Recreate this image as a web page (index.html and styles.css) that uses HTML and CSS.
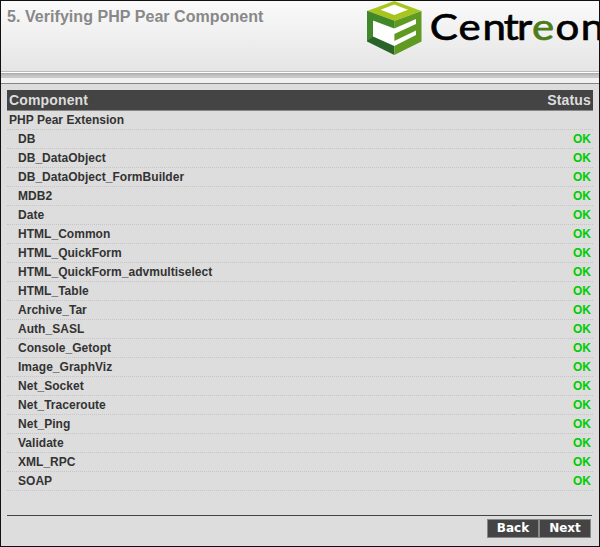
FILE: index.html
```html
<!DOCTYPE html>
<html lang="en">
<head>
<meta charset="utf-8">
<title>Verifying PHP Pear Component</title>
<link rel="stylesheet" href="styles.css">
</head>
<body>
<div class="window">
  <header class="header">
    <h1 class="title">5. Verifying PHP Pear Component</h1>
    <svg class="logo" width="233" height="60" viewBox="366 1 233 60" role="img" aria-label="Centreon">
      <path fill="#a7c51e" d="M394.300 1 421.500 11 394.300 21 367 11Z"/>
      <path fill="#fff" d="M394.300 4.500 408 9.800 394.300 15 380.500 9.800Z"/>
      <path fill="#296329" d="M367 11 394.300 21V55L367 41.500Z"/>
      <path fill="#41882a" d="M367 11 394.300 21V29L373 20.500V37L367 41Z"/>
      <path fill="#5f9b23" d="M394.300 21 421.500 11V41.500L394.300 55Z"/>
      <path fill="#fff" d="M373 20.500 394.300 28.500 416 19V24L394.300 34V41L416 30.500V35L394.300 46L373 36.500Z"/>
      <g class="wordmark" transform="translate(0 39.500) scale(1.120 1)">
        <text x="383.600 409.500 430.800 449.700 461.700 474.900 496 518.500">Centr<tspan class="accent">e</tspan>on</text>
      </g>
    </svg>
  </header>
  <div class="rule"></div>
  <div class="strip"></div>
  <main class="content">
    <table class="components">
      <thead><tr><th>Component</th><th class="status">Status</th></tr></thead>
      <tbody>
        <tr class="group"><td colspan="2">PHP Pear Extension</td></tr>
        <tr><td>DB</td><td class="ok">OK</td></tr>
        <tr><td>DB_DataObject</td><td class="ok">OK</td></tr>
        <tr><td>DB_DataObject_FormBuilder</td><td class="ok">OK</td></tr>
        <tr><td>MDB2</td><td class="ok">OK</td></tr>
        <tr><td>Date</td><td class="ok">OK</td></tr>
        <tr><td>HTML_Common</td><td class="ok">OK</td></tr>
        <tr><td>HTML_QuickForm</td><td class="ok">OK</td></tr>
        <tr><td>HTML_QuickForm_advmultiselect</td><td class="ok">OK</td></tr>
        <tr><td>HTML_Table</td><td class="ok">OK</td></tr>
        <tr><td>Archive_Tar</td><td class="ok">OK</td></tr>
        <tr><td>Auth_SASL</td><td class="ok">OK</td></tr>
        <tr><td>Console_Getopt</td><td class="ok">OK</td></tr>
        <tr><td>Image_GraphViz</td><td class="ok">OK</td></tr>
        <tr><td>Net_Socket</td><td class="ok">OK</td></tr>
        <tr><td>Net_Traceroute</td><td class="ok">OK</td></tr>
        <tr><td>Net_Ping</td><td class="ok">OK</td></tr>
        <tr><td>Validate</td><td class="ok">OK</td></tr>
        <tr><td>XML_RPC</td><td class="ok">OK</td></tr>
        <tr><td>SOAP</td><td class="ok">OK</td></tr>
      </tbody>
    </table>
    <div class="actions"><button class="button">Back</button><button class="button">Next</button></div>
  </main>
</div>
</body>
</html>
```
FILE: styles.css
```css
* { box-sizing: border-box; }
body { margin: 0; font-family: "Liberation Sans", Arial, sans-serif; }
.window {
  width: 600px;
  height: 547px;
  border: 1px solid #111;
  background: #ddd;
  overflow: hidden;
}
.header {
  display: flex;
  justify-content: space-between;
  height: 70px;
  padding-left: 6px;
  background: linear-gradient(#fafafa, #e5e5e5);
}
.title {
  margin: 6px 0 0;
  font-size: 16px;
  line-height: 19px;
  letter-spacing: 0.05px;
  color: #888;
  white-space: nowrap;
}
.logo { display: block; flex: none; }
.wordmark {
  font-family: Lato, sans-serif;
  font-size: 37.5px;
  stroke: #000;
  stroke-width: 0.7px;
}
.accent { fill: #4c7c1b; stroke: #4c7c1b; }
.rule {
  height: 7px;
  border-top: 1px solid #bbb;
  background: linear-gradient(#fff 0 1px, #aaa 1px, #c8c8c8 4px);
}
.strip { height: 6px; background: #f1f1f1; border-bottom: 1px solid #858585; }
.content { padding: 6px 6px 0; }
.components {
  width: 586px;
  border-spacing: 0;
  table-layout: fixed;
  font-size: 12px;
  font-weight: bold;
  letter-spacing: 0.03px;
  color: #333;
}
th {
  height: 21px;
  padding: 0 2px;
  border-bottom: 1px solid #888;
  background: #444;
  color: #ddd;
  font-size: 14px;
  line-height: 20px;
  letter-spacing: 0.15px;
  text-align: left;
}
.status { width: 80px; text-align: right; }
td {
  height: 19px;
  padding: 0 2px 0 11px;
  border-bottom: 1px dotted #c5c5c5;
  line-height: 18px;
}
.group td { padding-left: 2px; }
.ok { text-align: right; color: #0c0; }
.actions {
  display: flex;
  justify-content: flex-end;
  width: 585px;
  margin-top: 24px;
  padding: 3px 1px 0 0;
  border-top: 1px solid #444;
}
.button {
  width: 52px;
  height: 19px;
  margin: 0;
  padding: 0;
  border: 1px solid #888;
  background: #444;
  color: #fff;
  font: bold 12px/17px "DejaVu Sans", sans-serif;
}
```
